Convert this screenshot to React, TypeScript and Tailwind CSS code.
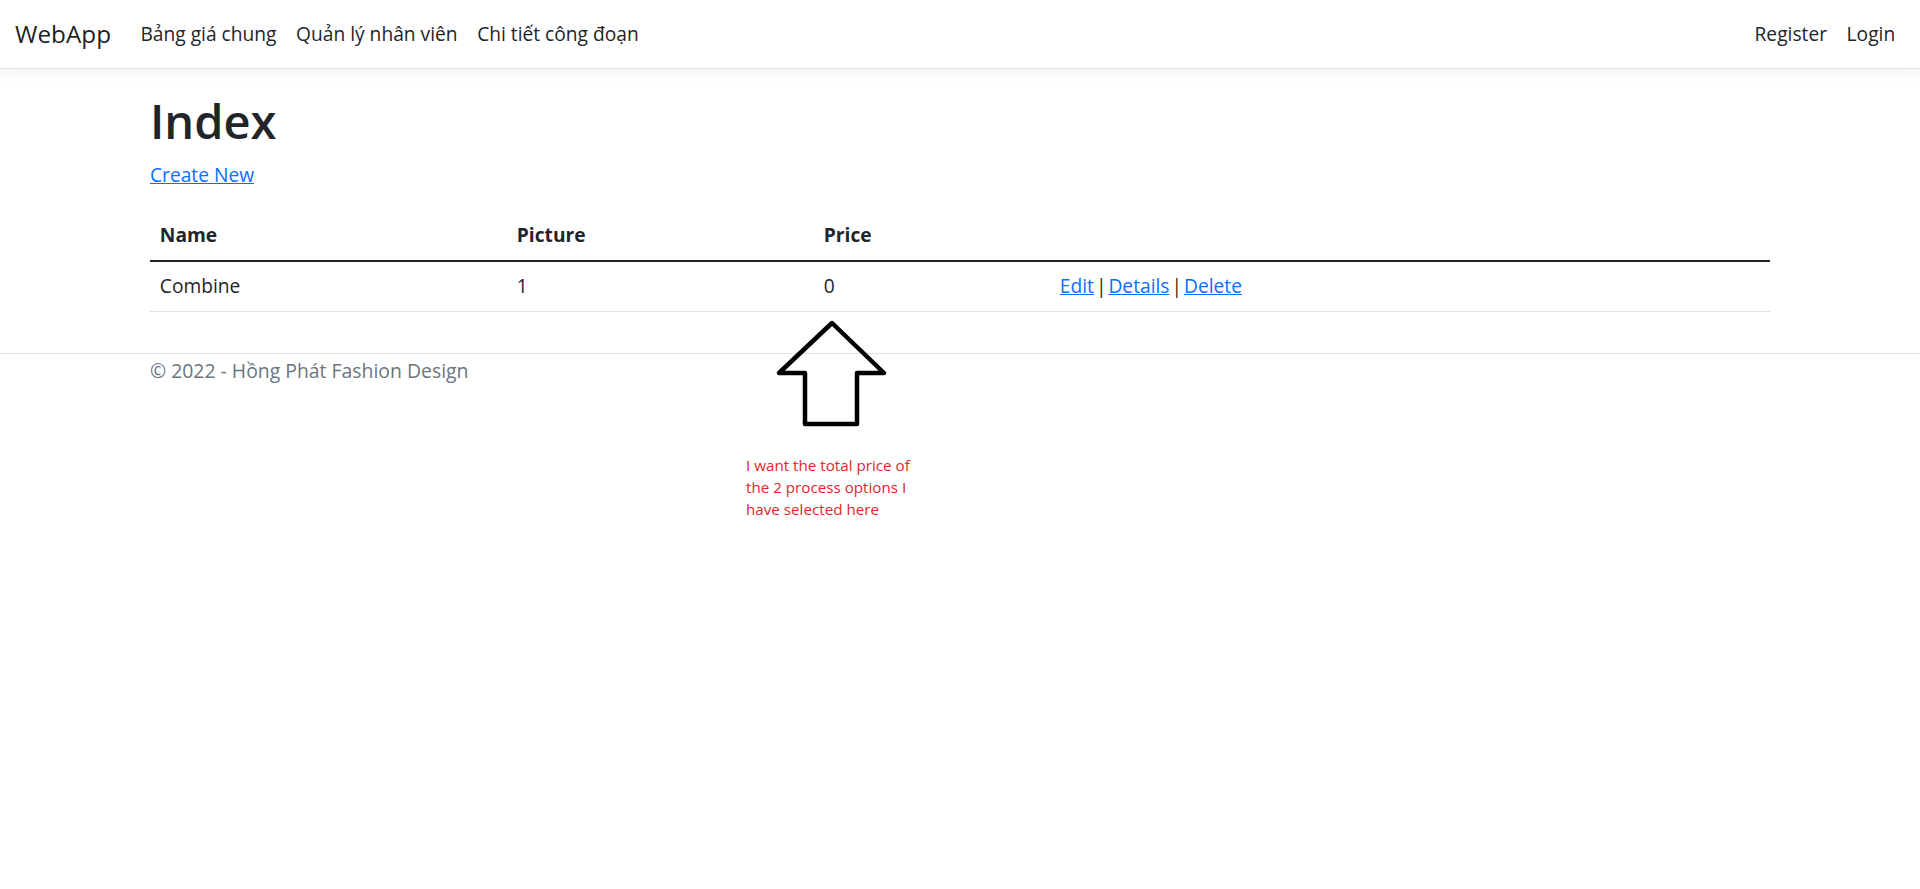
export default function App() {
  const font = { fontFamily: '"Open Sans", "Noto Sans", sans-serif' };

  return (
    <div className="relative min-h-[889px] bg-white text-[#212529]" style={font}>
      {/* Navbar */}
      <header className="h-[69px] border-b border-[#dee2e6] bg-white shadow-[0_5px_15px_rgba(0,0,0,0.05)] mb-[19.6px]">
        <nav className="flex h-full items-center justify-between px-[15px]">
          <div className="flex items-center">
            <a className="mr-[19.6px] text-[24.3px] leading-[1.5] text-[rgba(0,0,0,0.9)]">WebApp</a>
            <a className="px-[9.8px] text-[19.2px] leading-[1.5]">Bảng giá chung</a>
            <a className="px-[9.8px] text-[19.2px] leading-[1.5]">Quản lý nhân viên</a>
            <a className="px-[9.8px] text-[19.2px] leading-[1.5]">Chi tiết công đoạn</a>
          </div>
          <div className="flex items-center">
            <a className="px-[9.8px] text-[19.2px] leading-[1.5]">Register</a>
            <a className="px-[9.8px] text-[19.2px] leading-[1.5]">Login</a>
          </div>
        </nav>
      </header>

      {/* Main content */}
      <main className="mx-auto w-[1620px] pb-[21px]">
        <h1 className="mb-[11px] pt-[3px] text-[47px] font-semibold leading-[58.8px]">Index</h1>
        <p className="mb-[21px] text-[19.2px] leading-[1.5]">
          <a className="text-[#0d6efd] underline">Create New</a>
        </p>
        <table className="mb-[19.6px] w-full border-collapse text-[19.2px] leading-[1.5]">
          <thead>
            <tr className="border-b-2 border-[#212529]">
              <th className="w-[357px] p-[9.8px] text-left font-bold">Name</th>
              <th className="w-[307px] p-[9.8px] text-left font-bold">Picture</th>
              <th className="w-[236px] p-[9.8px] text-left font-bold">Price</th>
              <th className="p-[9.8px]"></th>
            </tr>
          </thead>
          <tbody>
            <tr className="border-b border-[#dee2e6]">
              <td className="px-[9.8px] py-[10.4px]">Combine</td>
              <td className="px-[9.8px] py-[10.4px]">1</td>
              <td className="px-[9.8px] py-[10.4px]">0</td>
              <td className="px-[9.8px] py-[10.4px]">
                <a className="text-[#0d6efd] underline">Edit</a>
                <span className="px-[2px]">|</span>
                <a className="text-[#0d6efd] underline">Details</a>
                <span className="px-[2px]">|</span>
                <a className="text-[#0d6efd] underline">Delete</a>
              </td>
            </tr>
          </tbody>
        </table>
      </main>

      {/* Footer */}
      <footer className="border-t border-[#dee2e6]">
        <div className="mx-auto w-[1620px] pt-[1px] text-[19.4px] leading-[1.6] text-[#6c757d]">
          © 2022 - Hồng Phát Fashion Design
        </div>
      </footer>

      {/* Annotation drawn over the screenshot */}
      <svg
        className="absolute left-[770px] top-[316px]"
        width="124"
        height="116"
        viewBox="770 316 124 116"
        fill="none"
      >
        <path
          d="M832 323 L779 373 L805 373 L805 424 L857 424 L857 373 L884 373 Z"
          stroke="#000"
          strokeWidth={4.5}
          strokeLinejoin="round"
        />
      </svg>
      <div className="absolute left-[746px] top-[454px] text-[15.2px] leading-[22px] text-[#e2262b]">
        I want the total price of
        <br />
        the 2 process options I
        <br />
        have selected here
      </div>
    </div>
  );
}
